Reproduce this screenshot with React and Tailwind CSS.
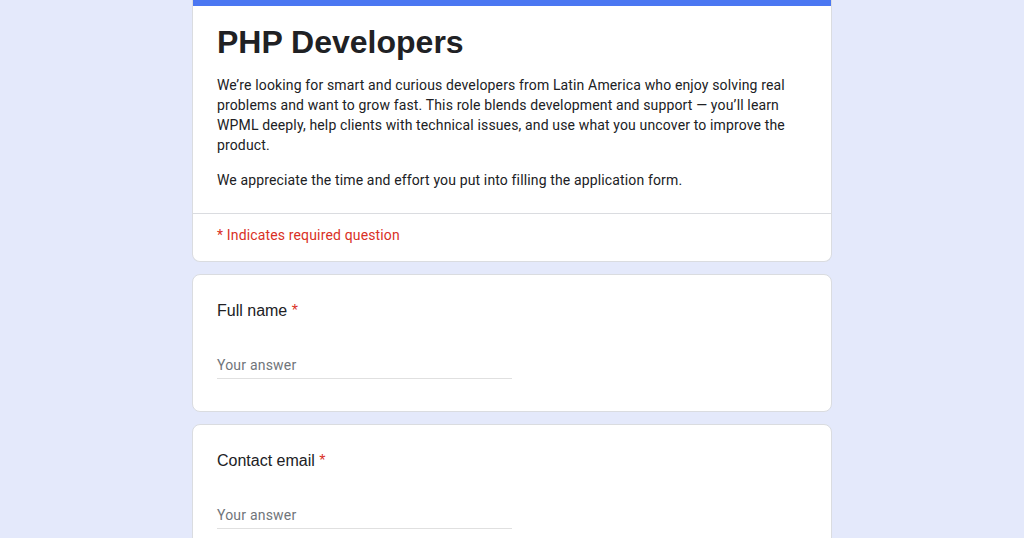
export default function App() {
  const roboto = { fontFamily: "Roboto, 'Liberation Sans', sans-serif" };
  return (
    <div className="min-h-[538px] w-full bg-[#e4e9fb] overflow-hidden">
      <div className="mx-auto w-[640px] flex flex-col gap-3">
        <div className="bg-white rounded-b-lg border border-t-0 border-[#dadce0] overflow-hidden">
          <div className="h-[6px] bg-[#4b77f2]" />
          <div className="px-6 pt-4 pb-[23px] border-b border-[#dadce0]">
            <h1 className="text-[32px] leading-[40px] font-bold text-[#202124]" style={{ fontFamily: "'Liberation Sans', Arial, sans-serif" }}>
              PHP Developers
            </h1>
            <div className="mt-[13px] text-[14px] leading-5 text-[#202124] tracking-[0.14px]" style={roboto}>
              <p>
                We’re looking for smart and curious developers from Latin America who enjoy solving real problems and want to grow fast. This role blends development and support — you’ll learn WPML deeply, help clients with technical issues, and use what you uncover to improve the product.
              </p>
              <p className="mt-[15px]">We appreciate the time and effort you put into filling the application form.</p>
            </div>
          </div>
          <div className="px-6 pt-[11px] pb-[16px] text-[14px] leading-5 text-[#d93025] tracking-[0.15px]" style={roboto}>
            * Indicates required question
          </div>
        </div>

        {["Full name", "Contact email"].map((label) => (
          <div key={label} className="bg-white rounded-lg border border-[#dadce0] px-6 pt-6 pb-8">
            <div className="text-[16px] leading-6 text-[#202124]" style={{ fontFamily: "'Liberation Sans', Arial, sans-serif" }}>
              {label} <span className="text-[#d93025]">*</span>
            </div>
            <div className="mt-[32px] w-[295px] border-b border-[#e0e0e0] pb-[3px]">
              <div className="text-[14px] leading-5 text-[#70757a] tracking-[0.2px]" style={roboto}>Your answer</div>
            </div>
          </div>
        ))}
      </div>
    </div>
  );
}
